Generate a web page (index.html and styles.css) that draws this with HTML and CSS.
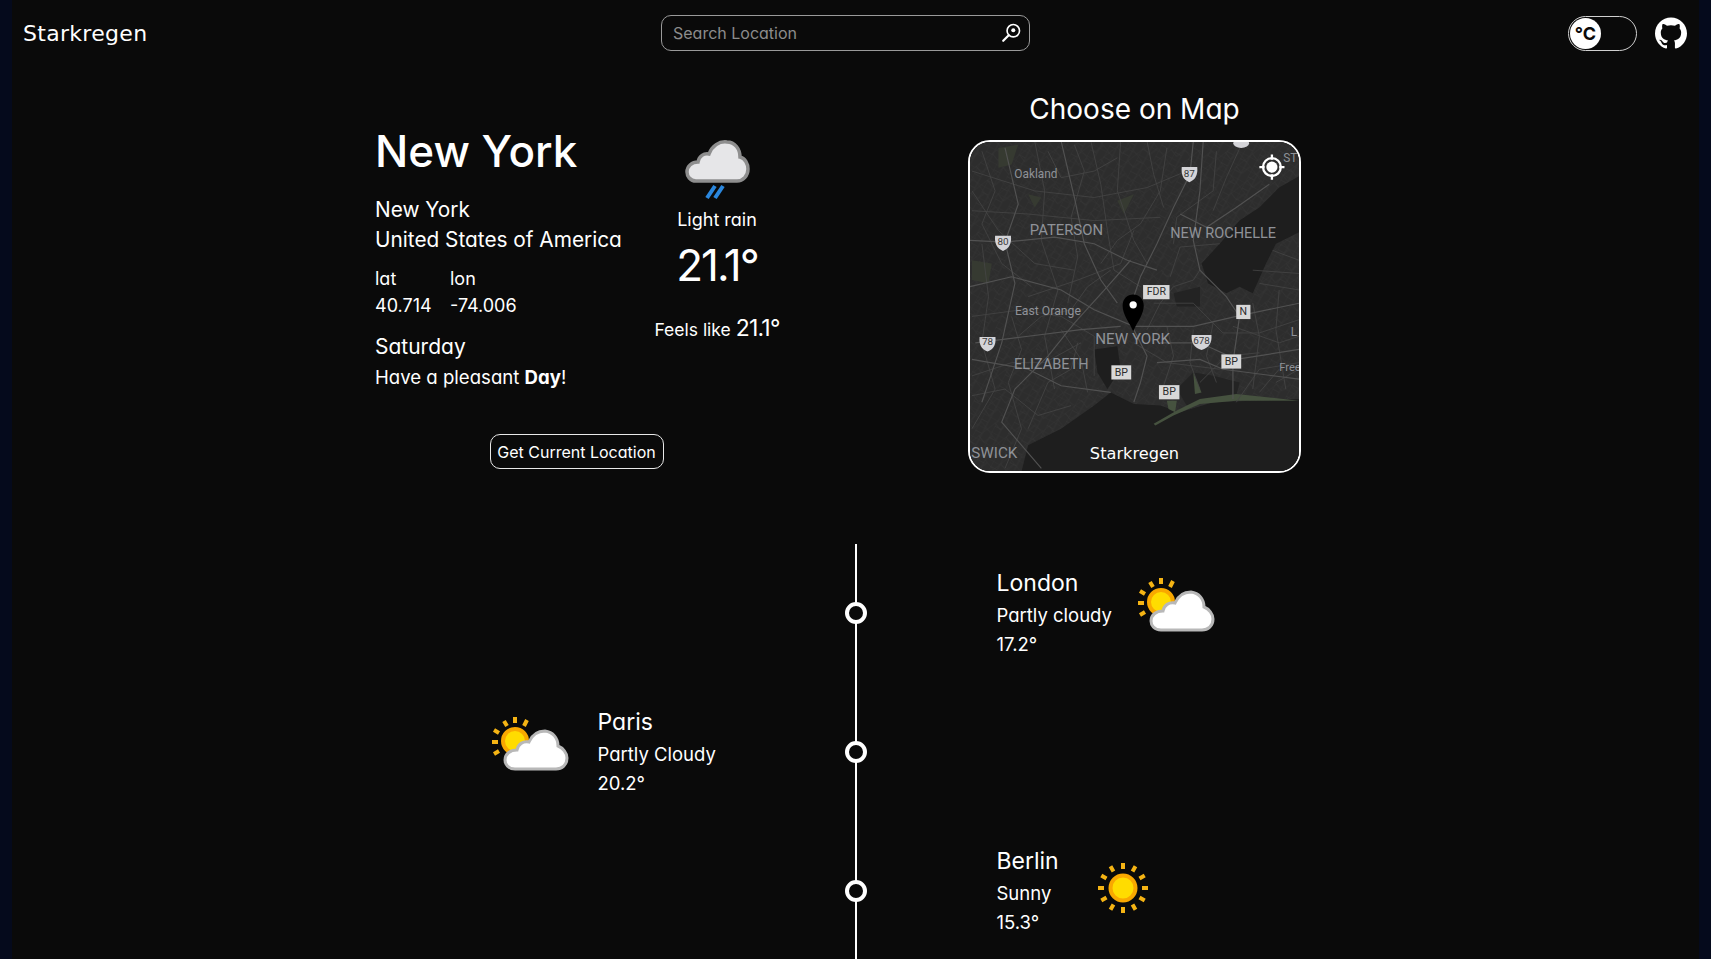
FILE: index.html
```html
<!DOCTYPE html>
<html lang="en">

<head>
    <meta charset="UTF-8">
    <meta name="viewport" content="width=device-width, initial-scale=1.0">
    <title>Starkregen</title>
    <link rel="stylesheet" href="styles.css">
</head>

<body>
    <div class="page">
        <header class="navbar">
            <div class="logo">Starkregen</div>
            <div class="search-box">
                <input class="search-input" type="text" placeholder="Search Location">
                <svg class="search-icon" viewBox="0 0 24 24">
                    <circle cx="14.5" cy="9.5" r="6.8" fill="none" stroke="#fff" stroke-width="1.8"/>
                    <circle cx="14.5" cy="9" r="2.2" fill="#fff"/>
                    <path d="M9.5 14.5 L3.5 20.5" stroke="#fff" stroke-width="2.4" stroke-linecap="round"/>
                </svg>
            </div>
            <div class="nav-right">
                <div class="unit-toggle"><span class="unit-thumb">°C</span></div>
                <svg class="github-icon" viewBox="0 0 24 24">
                    <path fill="#fff" d="M12 .297c-6.63 0-12 5.373-12 12 0 5.303 3.438 9.8 8.205 11.385.6.113.82-.258.82-.577 0-.285-.01-1.04-.015-2.04-3.338.724-4.042-1.61-4.042-1.61C4.422 18.07 3.633 17.7 3.633 17.7c-1.087-.744.084-.729.084-.729 1.205.084 1.838 1.236 1.838 1.236 1.07 1.835 2.809 1.305 3.495.998.108-.776.417-1.305.76-1.605-2.665-.3-5.466-1.332-5.466-5.93 0-1.31.465-2.38 1.235-3.22-.135-.303-.54-1.523.105-3.176 0 0 1.005-.322 3.3 1.23.96-.267 1.98-.399 3-.405 1.02.006 2.04.138 3 .405 2.28-1.552 3.285-1.23 3.285-1.23.645 1.653.24 2.873.12 3.176.765.84 1.23 1.91 1.23 3.22 0 4.61-2.805 5.625-5.475 5.92.42.36.81 1.096.81 2.22 0 1.606-.015 2.896-.015 3.286 0 .315.21.69.825.57C20.565 22.092 24 17.592 24 12.297c0-6.627-5.373-12-12-12"/>
                </svg>
            </div>
        </header>

        <section class="current">
            <div class="current-panel">
                <div class="current-row">
                    <div class="details">
                        <h1 class="city-title">New York</h1>
                        <p class="place">New York</p>
                        <p class="place">United States of America</p>
                        <div class="coords">
                            <div class="coord coord-lat"><span>lat</span><span>40.714</span></div>
                            <div class="coord"><span>lon</span><span>-74.006</span></div>
                        </div>
                        <p class="day">Saturday</p>
                        <p class="greeting">Have a pleasant <b>Day</b>!</p>
                    </div>
                    <div class="now">
                        <svg class="now-icon" viewBox="0 0 80 80">
                            <path class="cloud-grey" d="M19 52 C13 52 10 47 10 43 C10 37 15 33 21 33 C22 27 27 24 32 25 C35 17 42 12 50 13 C58 13 63 20 63 28 C68 29 71 35 71 40 C71 47 66 52 60 52 Z"/>
                            <path class="rain" d="M30 69 L38 57 M38 69 L46 57"/>
                        </svg>
                        <p class="condition">Light rain</p>
                        <p class="temp">21.1°</p>
                        <p class="feels">Feels like <span>21.1°</span></p>
                    </div>
                </div>
                <button class="location-btn">Get Current Location</button>
            </div>

            <div class="map-col">
                <h2 class="map-title">Choose on Map</h2>
                <div class="map">
                    <svg class="map-svg" viewBox="24 32 996 996">
                        <defs>
                            <pattern id="streets-a" width="46" height="38" patternUnits="userSpaceOnUse" patternTransform="rotate(28)">
                                <path class="street" d="M0 0H46M0 19H23M0 0V38M23 0V38"/>
                            </pattern>
                            <pattern id="streets-b" width="62" height="54" patternUnits="userSpaceOnUse" patternTransform="rotate(-38)">
                                <path class="street" d="M0 0H62M31 27H62M0 0V54M31 0V27"/>
                            </pattern>
                        </defs>
                        <rect class="land" x="0" y="0" width="1100" height="1100"/>
                        <rect fill="url(#streets-a)" x="0" y="0" width="1100" height="1100"/>
                        <rect fill="url(#streets-b)" x="0" y="0" width="1100" height="1100"/>
                        <path class="park-dark" d="M110 50 L170 40 L150 100 L110 110 Z M30 390 L90 400 L80 460 L30 450 Z M200 190 L240 200 L220 230 Z M470 210 L520 190 L490 250 Z"/>
                        <path class="water" d="M1030 130 L960 170 L900 230 L840 270 L780 340 L725 400 L745 460 L800 490 L840 470 L880 490 L920 400 L950 340 L1030 300 Z"/>
                        <path class="water" d="M180 1030 L200 950 L300 900 L400 830 L450 790 L520 825 L600 830 L660 850 L760 820 L1030 810 L1030 1030 Z"/>
                        <path class="water" d="M400 660 L470 650 L480 720 L440 780 L410 730 Z"/>
                        <path class="water-soft" d="M640 490 L720 470 L720 530 L650 530 Z M650 780 L700 730 L760 740 L840 760 L830 800 L680 830 Z"/>
                        <path class="green" d="M580 885 L650 845 L720 810 L830 795 L1020 815 L830 815 L720 825 L640 860 L585 890 Z M620 815 L650 815 L645 850 L625 840 Z M700 730 L725 790 L705 795 Z"/>
                        <g class="roads-minor">
                            <path d="M480 30 L470 180 L520 330 L560 400"/>
                            <path d="M830 820 L900 720 L1020 700"/>
                            <path d="M700 600 L690 700 L720 780"/>
                            <path d="M520 640 L620 700 L780 720"/>
                            <path d="M30 120 L220 180 L400 200 L560 170 L680 120"/>
                            <path d="M30 240 L200 250 L400 270 L600 260"/>
                            <path d="M30 560 L180 540 L300 560 L400 620 L400 740"/>
                            <path d="M220 30 L250 180 L240 330 L290 480 L250 620 L280 780"/>
                            <path d="M390 30 L420 160 L440 300 L460 420 L540 470"/>
                            <path d="M60 340 L80 500 L60 640 L100 780 L30 900"/>
                            <path d="M30 800 L130 780 L230 860 L330 830"/>
                            <path d="M200 500 L350 450 L480 400 L520 300"/>
                            <path d="M350 640 L330 720 L260 760 L200 900"/>
                            <path d="M580 520 L700 520 L790 610 L900 610 L1020 570"/>
                            <path d="M620 590 L640 680 L610 770"/>
                            <path d="M880 520 L900 620 L880 780"/>
                            <path d="M960 480 L950 600 L980 780"/>
                            <path d="M780 340 L660 350 L630 440"/>
                            <path d="M850 30 L800 140 L760 240"/>
                            <path d="M560 30 L580 130 L610 230"/>
                            <path d="M30 180 L110 300 L220 400 L340 420"/>
                            <path d="M720 760 L800 680 L900 670"/>
                            <path d="M340 40 L370 120 L330 260 L350 380 L320 520"/>
                            <path d="M60 60 L100 180 L60 280 L120 400 L210 470"/>
                            <path d="M620 50 L600 180 L540 280 L470 330 L420 400"/>
                            <path d="M770 60 L760 180 L650 260 L640 340"/>
                            <path d="M880 420 L1020 430 M900 460 L1020 480 M940 360 L1020 390"/>
                            <path d="M30 740 L150 700 L250 700 L360 640"/>
                            <path d="M150 560 L180 660 L140 760 L180 900 L130 1020"/>
                            <path d="M300 600 L360 690 L380 790"/>
                            <path d="M560 600 L600 520 L640 470 L700 450 L720 420"/>
                            <path d="M760 580 L740 680 L770 760"/>
                            <path d="M820 590 L960 640 L1020 620"/>
                            <path d="M950 760 L1020 720 M900 790 L960 720"/>
                            <path d="M450 420 L380 470 L330 540 L240 560 L170 620"/>
                            <path d="M260 60 L300 140 L400 120 L470 80"/>
                        </g>
                        <g class="roads-main">
                            <path d="M700 30 L690 130 L640 230 L590 340 L540 440 L510 530"/>
                            <path d="M24 330 L130 335 L280 320 L400 340 L500 390 L590 420"/>
                            <path d="M24 470 L150 440 L300 480 L400 540 L520 590 L700 590 L830 560 L1020 520"/>
                            <path d="M40 640 L200 620 L360 600 L480 590"/>
                            <path d="M240 1020 L120 880 L160 780 L260 680 L340 580 L440 470 L510 390"/>
                            <path d="M520 600 L560 680 L540 760 L520 820"/>
                            <path d="M730 30 L720 180 L700 330 L720 420 L800 500 L840 560 L820 700 L820 810"/>
                            <path d="M30 690 L200 720 L300 770 L450 790"/>
                            <path d="M600 640 L720 640 L830 690 L1020 660"/>
                            <path d="M300 30 L340 200 L370 340 L420 450 L470 520"/>
                            <path d="M130 50 L170 220 L130 335 L160 460 L120 640 L60 820"/>
                            <path d="M660 250 L740 290 L830 230 L930 160"/>
                            <path d="M590 700 L720 690 L790 720 L1020 750"/>
                        </g>
                        <ellipse class="shield" cx="845" cy="36" rx="24" ry="14"/>
                        <g class="map-label">
                            <text x="158" y="140" font-size="36">Oakland</text>
                            <text x="205" y="313" font-size="45">PATERSON</text>
                            <text x="630" y="322" font-size="44">NEW ROCHELLE</text>
                            <text x="160" y="555" font-size="37">East Orange</text>
                            <text x="403" y="643" font-size="46">NEW YORK</text>
                            <text x="157" y="720" font-size="44">ELIZABETH</text>
                            <text x="28" y="990" font-size="46">SWICK</text>
                            <text x="960" y="725" font-size="34">Free</text>
                            <text x="995" y="618" font-size="36">L</text>
                            <text x="972" y="92" font-size="36">ST</text>
                        </g>
                        <g class="road-shields">
                            <path class="shield" d="M665 108 H712 C714 130 708 146 688 154 C668 146 663 130 665 108 Z"/>
                            <path class="shield" d="M100 316 H148 C150 338 144 354 124 362 C104 354 98 338 100 316 Z"/>
                            <path class="shield" d="M53 622 H101 C103 644 97 658 77 666 C57 658 51 644 53 622 Z"/>
                            <path class="shield" d="M695 616 H755 C757 640 748 654 725 662 C702 654 693 640 695 616 Z"/>
                            <text x="688" y="138">87</text>
                            <text x="124" y="345">80</text>
                            <text x="77" y="648">78</text>
                            <text x="725" y="645" font-size="28">678</text>
                        </g>
                        <g class="road-boxes">
                            <rect x="548" y="465" width="80" height="43"/>
                            <rect x="830" y="525" width="43" height="43"/>
                            <rect x="785" y="675" width="60" height="43"/>
                            <rect x="452" y="708" width="60" height="43"/>
                            <rect x="596" y="768" width="62" height="43"/>
                            <text x="588" y="496">FDR</text>
                            <text x="851" y="557">N</text>
                            <text x="815" y="707">BP</text>
                            <text x="482" y="739">BP</text>
                            <text x="627" y="799">BP</text>
                        </g>
                        <path class="map-pin" d="M518 605 C505 575 486 555 486 527 C486 508 500 494 518 494 C536 494 550 508 550 527 C550 555 531 575 518 605 Z"/>
                        <circle class="map-pin-dot" cx="518" cy="525" r="11"/>
                        <g class="map-gps">
                            <circle cx="938" cy="108" r="27" fill="none" stroke="#fff" stroke-width="7"/>
                            <circle cx="938" cy="108" r="17" fill="#fff"/>
                            <path d="M938 70 V86 M938 130 V146 M900 108 H916 M960 108 H976" stroke="#fff" stroke-width="7"/>
                        </g>
                        <text class="map-brand" x="522" y="992">Starkregen</text>
                    </svg>
                </div>
            </div>
        </section>

        <section class="timeline">
            <div class="tl-row">
                <div class="tl-side"></div>
                <div class="tl-node"></div>
                <div class="tl-side tl-right">
                    <div class="tl-text">
                        <p class="tl-city">London</p>
                        <p class="tl-cond">Partly cloudy</p>
                        <p class="tl-temp">17.2°</p>
                    </div>
                    <svg class="tl-icon" viewBox="0 0 80 80">
                        <circle class="sun-core" cx="24" cy="29" r="12"/>
                        <path class="sun-rays" d="M1 30 H7 M3 18 L8 21 M13 9 L16 14 M24 5 V11 M36 8 L33 14 M3 42 L8 39"/>
                        <path class="cloud-white" d="M24 57 C17 57 14 52 14 48 C14 42 19 38 26 38 C27 32 32 29 38 30 C41 23 47 19 54 19 C62 20 67 26 67 34 C72 36 76 41 76 46 C76 53 71 57 65 57 Z"/>
                    </svg>
                </div>
            </div>
            <div class="tl-row">
                <div class="tl-side tl-left">
                    <svg class="tl-icon" viewBox="0 0 80 80">
                        <circle class="sun-core" cx="24" cy="29" r="12"/>
                        <path class="sun-rays" d="M1 30 H7 M3 18 L8 21 M13 9 L16 14 M24 5 V11 M36 8 L33 14 M3 42 L8 39"/>
                        <path class="cloud-white" d="M24 57 C17 57 14 52 14 48 C14 42 19 38 26 38 C27 32 32 29 38 30 C41 23 47 19 54 19 C62 20 67 26 67 34 C72 36 76 41 76 46 C76 53 71 57 65 57 Z"/>
                    </svg>
                    <div class="tl-text tl-text-paris">
                        <p class="tl-city">Paris</p>
                        <p class="tl-cond">Partly Cloudy</p>
                        <p class="tl-temp">20.2°</p>
                    </div>
                </div>
                <div class="tl-node"></div>
                <div class="tl-side"></div>
            </div>
            <div class="tl-row">
                <div class="tl-side"></div>
                <div class="tl-node"></div>
                <div class="tl-side tl-right">
                    <div class="tl-text">
                        <p class="tl-city">Berlin</p>
                        <p class="tl-cond">Sunny</p>
                        <p class="tl-temp">15.3°</p>
                    </div>
                    <svg class="tl-icon" viewBox="0 0 80 80">
                        <g transform="translate(-1 -3)">
                            <circle class="sun-core" cx="40" cy="40" r="12.5"/>
                            <path class="sun-rays" d="M15 40 H21 M59 40 H65 M40 15 V21 M40 59 V65 M27.5 18.3 L30.5 23.5 M52.5 18.3 L49.5 23.5 M27.5 61.7 L30.5 56.5 M52.5 61.7 L49.5 56.5 M18.3 27.5 L23.5 30.5 M61.7 27.5 L56.5 30.5 M18.3 52.5 L23.5 49.5 M61.7 52.5 L56.5 49.5"/>
                        </g>
                    </svg>
                </div>
            </div>
        </section>
    </div>
</body>

</html>
```

FILE: styles.css
```css
* {
    box-sizing: border-box;
}

html, body {
    height: 100%;
    overflow: hidden;
}

body {
    margin: 0;
    background-color: #050a1c;
    color: #fff;
    font-family: 'Inter', 'Open Sans', sans-serif;
    font-feature-settings: "cv11";
}

p, h1, h2 {
    margin: 0;
    font-weight: 400;
}

.page {
    margin: 0 12px;
    height: 100%;
    background-color: #0a0a0a;
}

/* navbar */
.navbar {
    display: flex;
    align-items: center;
    height: 66px;
    padding: 0 12px 0 11px;
}

.logo {
    width: 124px;
    font-family: 'DejaVu Sans', sans-serif;
    font-size: 22px;
    letter-spacing: 0.3px;
    white-space: nowrap;
}

.search-box {
    display: flex;
    align-items: center;
    width: 369px;
    height: 36px;
    margin-left: 514px;
    padding: 0 7px 0 9px;
    border: 1px solid #9a9a9a;
    border-radius: 10px;
}

.search-input {
    flex: 1;
    background: none;
    border: none;
    outline: none;
    color: #fff;
    font-family: inherit;
    font-feature-settings: inherit;
    font-size: 16px;
}

.search-input::placeholder {
    color: #8c8c8c;
    opacity: 1;
}

.search-icon {
    width: 22px;
    height: 22px;
}

.nav-right {
    display: flex;
    align-items: center;
    gap: 18px;
    margin-left: auto;
}

.unit-toggle {
    display: flex;
    align-items: center;
    width: 69px;
    height: 35px;
    padding-left: 1px;
    border: 1.5px solid #d0d0d0;
    border-radius: 18px;
}

.unit-thumb {
    display: flex;
    align-items: center;
    justify-content: center;
    width: 31px;
    height: 31px;
    border-radius: 50%;
    background-color: #fff;
    color: #0a0a0a;
    font-size: 18px;
    font-weight: 700;
}

.github-icon {
    width: 32px;
    height: 32px;
}

/* current weather */
.current {
    display: flex;
    align-items: flex-start;
    padding: 25px 0 0 363px;
}

.current-panel {
    display: flex;
    flex-direction: column;
    width: 404px;
    margin-right: 189px;
    padding-top: 32px;
}

.current-row {
    display: flex;
}

.details {
    width: 280px;
}

.city-title {
    font-size: 44px;
    font-weight: 500;
    line-height: 56px;
    margin-bottom: 16px;
}

.place {
    font-size: 20.8px;
    line-height: 29.5px;
}

.coords {
    display: flex;
    margin-top: 11px;
}

.coord {
    display: flex;
    flex-direction: column;
    font-size: 18px;
    line-height: 27px;
}

.coord-lat {
    width: 75px;
}

.day {
    margin-top: 13px;
    font-size: 21px;
    line-height: 30px;
}

.greeting {
    margin-top: 1px;
    font-size: 18.6px;
    line-height: 28px;
}

.now {
    display: flex;
    flex-direction: column;
    align-items: center;
    width: 124px;
}

.now-icon {
    width: 80px;
    height: 80px;
    margin-top: 6px;
}

.condition {
    margin-top: -2px;
    font-size: 18px;
    line-height: 26px;
}

.temp {
    margin-top: 4px;
    font-size: 44px;
    font-weight: 400;
    letter-spacing: -2px;
    line-height: 56px;
}

.feels {
    margin-top: 19px;
    font-size: 17.5px;
    line-height: 32px;
    white-space: nowrap;
}

.feels span {
    font-size: 23px;
    letter-spacing: -0.8px;
}

.location-btn {
    align-self: center;
    width: 174px;
    height: 35px;
    margin-top: 43px;
    margin-left: -1px;
    background: none;
    border: 1px solid #e8e8e8;
    border-radius: 10px;
    color: #fff;
    font-family: inherit;
    font-feature-settings: inherit;
    font-size: 16px;
    white-space: nowrap;
    padding: 0;
}

/* map */
.map-col {
    display: flex;
    flex-direction: column;
    align-items: center;
    width: 333px;
}

.map-title {
    font-size: 28px;
    line-height: 36px;
    margin-bottom: 13px;
    white-space: nowrap;
}

.map {
    width: 333px;
    height: 333px;
    border: 2px solid #fff;
    border-radius: 22px;
    overflow: hidden;
}

.map-svg {
    display: block;
    width: 100%;
    height: 100%;
}

.land { fill: #2d2d2d; }
.water { fill: #1e1e1e; }
.water-soft { fill: #232323; }
.green { fill: #46523f; }
.park-dark { fill: #363a31; }

.street {
    fill: none;
    stroke: #373737;
    stroke-width: 1.6;
}

.roads-main {
    filter: blur(0.4px);
}

.roads-main path {
    fill: none;
    stroke: #525252;
    stroke-width: 3.5;
}

.roads-minor path {
    fill: none;
    stroke: #454545;
    stroke-width: 2.5;
}

.map-label text {
    fill: #8f9298;
    font-family: 'Roboto', sans-serif;
}

.shield { fill: #d4d4d8; }

.road-shields text {
    fill: #3a3a3a;
    font-family: 'Roboto', sans-serif;
    font-size: 30px;
    text-anchor: middle;
}

.road-boxes rect { fill: #d8d8d8; }

.road-boxes text {
    fill: #2c2c2c;
    font-family: 'Roboto', sans-serif;
    font-size: 32px;
    text-anchor: middle;
}

.map-pin { fill: #000; }
.map-pin-dot { fill: #fff; }

.map-brand {
    fill: #fff;
    font-family: 'DejaVu Sans', sans-serif;
    font-size: 49px;
    text-anchor: middle;
}

/* timeline */
.timeline {
    margin-top: 71px;
}

.tl-row {
    display: grid;
    grid-template-columns: 1fr 22px 1fr;
    align-items: center;
    height: 139px;
    padding-bottom: 2px;
    background: linear-gradient(#fff, #fff) center / 2px 100% no-repeat;
}

.tl-node {
    width: 22px;
    height: 22px;
    border: 4px solid #fff;
    border-radius: 50%;
    background-color: #0a0a0a;
}

.tl-side {
    display: flex;
    align-items: center;
}

.tl-right {
    padding-left: 130px;
    gap: 25px;
}

.tl-left {
    justify-content: flex-end;
    padding-right: 129px;
    gap: 27px;
}

.tl-text-paris {
    width: 118px;
}

.tl-city {
    font-size: 23px;
    line-height: 32px;
    margin-bottom: 1px;
}

.tl-cond {
    font-size: 18.5px;
    line-height: 30px;
    white-space: nowrap;
}

.tl-temp {
    font-size: 18.5px;
    line-height: 28px;
}

.tl-icon {
    width: 80px;
    height: 80px;
    flex-shrink: 0;
}

.cloud-grey {
    fill: #e6e6e8;
    stroke: #8e8e8e;
    stroke-width: 3.5;
    filter: blur(0.3px);
}

.cloud-white {
    fill: #fff;
    stroke: #b8b8b8;
    stroke-width: 3;
    filter: blur(0.3px);
}

.rain {
    fill: none;
    stroke: #2b87dd;
    stroke-width: 4;
}

.sun-core {
    fill: #ffdc00;
    stroke: #f9a800;
    stroke-width: 4;
}

.sun-rays {
    fill: none;
    stroke: #f5b414;
    stroke-width: 4;
}
```
